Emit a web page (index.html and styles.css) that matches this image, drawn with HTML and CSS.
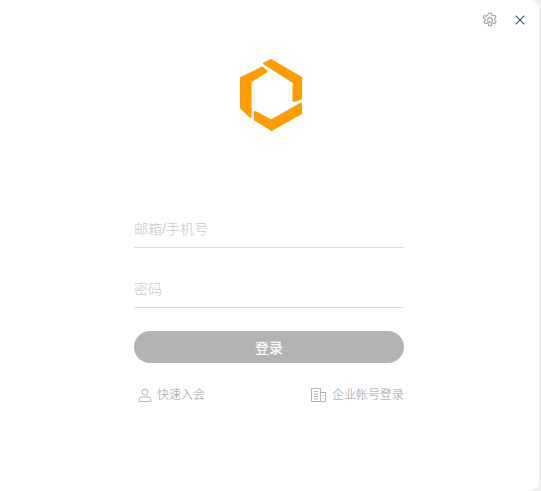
FILE: index.html
```html
<!DOCTYPE html>
<html lang="zh-CN">
<head>
  <meta charset="UTF-8">
  <title>登录</title>
  <link rel="stylesheet" href="styles.css">
</head>
<body>
  <div class="window">
    <!-- 顶部按钮 -->
    <div class="top-bar">
      <button class="icon-btn" aria-label="设置">
        <svg width="16" height="16" viewBox="0 0 16 16" fill="none" stroke="#a2a6aa" stroke-width="1.1" stroke-linejoin="round">
          <path d="M6.7 1.2h2.6l.4 1.900 1.200.7 1.900-.6 1.300 2.200-1.500 1.300v1.400l1.500 1.300-1.300 2.200-1.900-.6-1.200.7-.4 1.900H6.700l-.4-1.900-1.200-.7-1.900.6-1.300-2.200 1.500-1.300V7.100L.9 5.800l1.300-2.200 1.900.6 1.200-.7z"/>
          <circle cx="8" cy="8" r="2.400"/>
        </svg>
      </button>
      <button class="icon-btn" aria-label="关闭">
        <svg width="10" height="10" viewBox="0 0 10 10" fill="none" stroke="#3d5a7c" stroke-width="1.200">
          <path d="M.6.6l8.800 8.800M9.400.6L.6 9.400"/>
        </svg>
      </button>
    </div>

    <!-- logo -->
    <div class="logo">
      <svg width="64" height="74" viewBox="239 58 64 74" fill="#ff9c00" stroke="#ff9c00" stroke-width="2" stroke-linejoin="round">
        <polygon points="264,63.500 271,60 301,77.500 301,98.500 293.500,101 293.500,82.500"/>
        <polygon points="241,78 262,67.500 266.500,71.500 250.500,81.500 250.500,117 241,108"/>
        <polygon points="255,112 271,120.500 301,103.500 301,113.500 271.500,130 255,120"/>
      </svg>
    </div>

    <!-- 登录表单 -->
    <form class="login-form">
      <input class="field" type="text" placeholder="邮箱/手机号">
      <input class="field" type="password" placeholder="密码">
      <button class="submit-btn" type="button">登录</button>
      <div class="links">
        <a class="link link-join">
          <svg width="14" height="14" viewBox="0 0 14 14" fill="none" stroke="#b5b5b5" stroke-width="1">
            <circle cx="7" cy="4" r="3"/>
            <path d="M1 13.500v-1.500c0-1.700 1.300-3 3-3h6c1.700 0 3 1.300 3 3v1.500z"/>
          </svg>
          快速入会
        </a>
        <a class="link link-company">
          <svg width="15" height="14" viewBox="0 0 15 14" fill="none" stroke="#b5b5b5" stroke-width="1">
            <path d="M.5 13.500V.5h9v13zM9.500 4.500h5v9h-5M3 3.500h4M3 6h4M3 8.500h4M3 11h4M11.500 7.500h1M11.500 10h1"/>
          </svg>
          企业帐号登录
        </a>
      </div>
    </form>
  </div>
</body>
</html>
```

FILE: styles.css
```css
* {
  box-sizing: border-box;
  margin: 0;
  padding: 0;
}
html, body {
  height: 100%;
}
body {
  background: #efefef;
  font-family: "Liberation Sans", "Noto Sans CJK SC", sans-serif;
  padding: 0 2px 0 0;
}
.window {
  background: #fff;
  height: 100%;
  border-radius: 0 8px 10px 0;
}
/* 顶部按钮 */
.top-bar {
  display: flex;
  justify-content: flex-end;
  align-items: center;
  gap: 17px;
  height: 38px;
  padding: 2px 14px 0 0;
}
.icon-btn {
  display: flex;
  background: none;
  border: none;
  cursor: pointer;
}
/* logo */
.logo {
  display: flex;
  justify-content: center;
  padding-left: 3px;
  margin-top: 20px;
}
/* 登录表单 */
.login-form {
  width: 270px;
  margin: 80px 0 0 134px;
  display: flex;
  flex-direction: column;
}
.field {
  height: 36px;
  margin-top: 24px;
  padding-bottom: 2px;
  border: none;
  border-bottom: 1px solid #dcdcdc;
  outline: none;
  font-family: inherit;
  font-size: 14px;
  font-weight: 300;
  color: #333;
}
.field:first-child {
  margin-top: 0;
}
.field::placeholder {
  color: #c8c8c8;
}
.submit-btn {
  height: 32px;
  margin-top: 23px;
  background: #b3b3b3;
  border: none;
  border-radius: 16px;
  color: #fff;
  font-family: inherit;
  font-size: 14px;
  font-weight: 500;
  cursor: pointer;
}
.links {
  display: flex;
  justify-content: space-between;
  margin-top: 24px;
  padding-left: 4px;
}
.link {
  display: flex;
  align-items: center;
  gap: 5px;
  font-size: 12px;
  font-weight: 300;
  line-height: 16px;
  color: #999;
  cursor: pointer;
}
.link-company {
  gap: 6px;
  margin-left: -2px;
}
```
